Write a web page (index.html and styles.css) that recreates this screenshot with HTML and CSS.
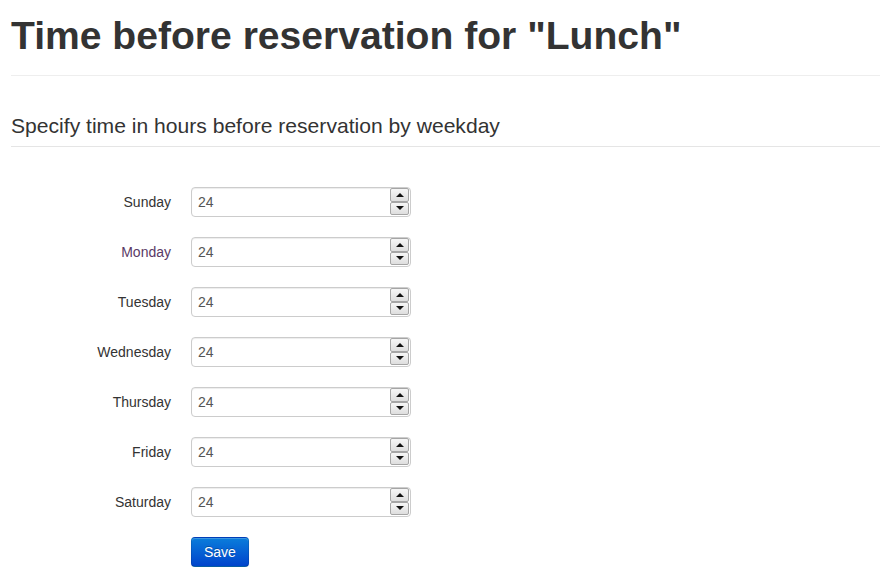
FILE: index.html
```html
<!DOCTYPE html>
<html>
<head>
<meta charset="utf-8">
<link rel="stylesheet" href="styles.css">
</head>
<body>
<div class="container">
  <div class="page-header"><h1>Time before reservation for "Lunch"</h1></div>
  <form class="form">
    <div class="legend">Specify time in hours before reservation by weekday</div>
    <div class="rows">
      <div class="row"><label class="label">Sunday</label><div class="field"><input class="num" type="text" value="24"><div class="spin"><span class="sb"><i class="up"></i></span><span class="sb"><i class="down"></i></span></div></div></div>
      <div class="row"><label class="label visited">Monday</label><div class="field"><input class="num" type="text" value="24"><div class="spin"><span class="sb"><i class="up"></i></span><span class="sb"><i class="down"></i></span></div></div></div>
      <div class="row"><label class="label">Tuesday</label><div class="field"><input class="num" type="text" value="24"><div class="spin"><span class="sb"><i class="up"></i></span><span class="sb"><i class="down"></i></span></div></div></div>
      <div class="row"><label class="label">Wednesday</label><div class="field"><input class="num" type="text" value="24"><div class="spin"><span class="sb"><i class="up"></i></span><span class="sb"><i class="down"></i></span></div></div></div>
      <div class="row"><label class="label">Thursday</label><div class="field"><input class="num" type="text" value="24"><div class="spin"><span class="sb"><i class="up"></i></span><span class="sb"><i class="down"></i></span></div></div></div>
      <div class="row"><label class="label">Friday</label><div class="field"><input class="num" type="text" value="24"><div class="spin"><span class="sb"><i class="up"></i></span><span class="sb"><i class="down"></i></span></div></div></div>
      <div class="row"><label class="label">Saturday</label><div class="field"><input class="num" type="text" value="24"><div class="spin"><span class="sb"><i class="up"></i></span><span class="sb"><i class="down"></i></span></div></div></div>
      <div class="row"><span class="label"></span><button class="btn" type="button">Save</button></div>
    </div>
  </form>
</div>
</body>
</html>
```
FILE: styles.css
```css
html, body {
  margin: 0;
  padding: 0;
  background: #fff;
}
body {
  font-family: "Liberation Sans", Arial, sans-serif;
  font-size: 14px;
  line-height: 20px;
  color: #333;
}
.container {
  padding: 0 14px 0 11px;
}
.page-header {
  padding: 16px 0 19px;
  border-bottom: 1px solid #eee;
  margin-bottom: 30px;
}
.page-header h1 {
  margin: 0;
  font-size: 39.1px;
  line-height: 40px;
  font-weight: bold;
  color: #333;
}
.legend {
  font-size: 21.1px;
  line-height: 40px;
  color: #333;
  border-bottom: 1px solid #e5e5e5;
  margin-bottom: 40px;
}
.rows {
  display: flex;
  flex-direction: column;
  gap: 20px;
}
.row {
  display: flex;
  align-items: flex-start;
  gap: 20px;
}
.label {
  width: 160px;
  text-align: right;
  padding-top: 5px;
  line-height: 20px;
  color: #333;
}
.label.visited {
  color: #5a3a66;
}
.field {
  display: flex;
  align-items: center;
  width: 220px;
  height: 30px;
  box-sizing: border-box;
  border: 1px solid #ccc;
  border-radius: 4px;
  box-shadow: inset 0 1px 1px rgba(0,0,0,0.075);
  background: #fff;
  padding: 0 1px 0 6px;
}
.num {
  flex: 1;
  min-width: 0;
  border: 0;
  outline: 0;
  padding: 0;
  margin: 0;
  background: transparent;
  font-family: "Liberation Sans", Arial, sans-serif;
  font-size: 14px;
  line-height: 20px;
  color: #555;
}
.spin {
  display: flex;
  flex-direction: column;
  width: 19px;
  height: 28px;
  box-sizing: border-box;
  padding: 0 0 1px;
}
.sb {
  flex: 1;
  display: flex;
  align-items: center;
  justify-content: center;
  border: 1px solid #a5a5a5;
  background: linear-gradient(#f6f6f6, #dedede);
  border-radius: 2px;
}
.up, .down {
  width: 0;
  height: 0;
  border-left: 4px solid transparent;
  border-right: 4px solid transparent;
}
.up {
  border-bottom: 4px solid #111;
}
.down {
  border-top: 4px solid #111;
}
.btn {
  height: 30px;
  padding: 4px 12px;
  font-family: "Liberation Sans", Arial, sans-serif;
  font-size: 14px;
  line-height: 20px;
  color: #fff;
  text-shadow: 0 -1px 0 rgba(0,0,0,0.25);
  background: linear-gradient(#0a7ddb, #0044cc);
  border: 1px solid;
  border-color: rgba(0,0,0,0.1) rgba(0,0,0,0.1) rgba(0,0,0,0.25);
  border-radius: 4px;
  box-shadow: inset 0 1px 0 rgba(255,255,255,0.2), 0 1px 2px rgba(0,0,0,0.05);
  cursor: pointer;
}
```
